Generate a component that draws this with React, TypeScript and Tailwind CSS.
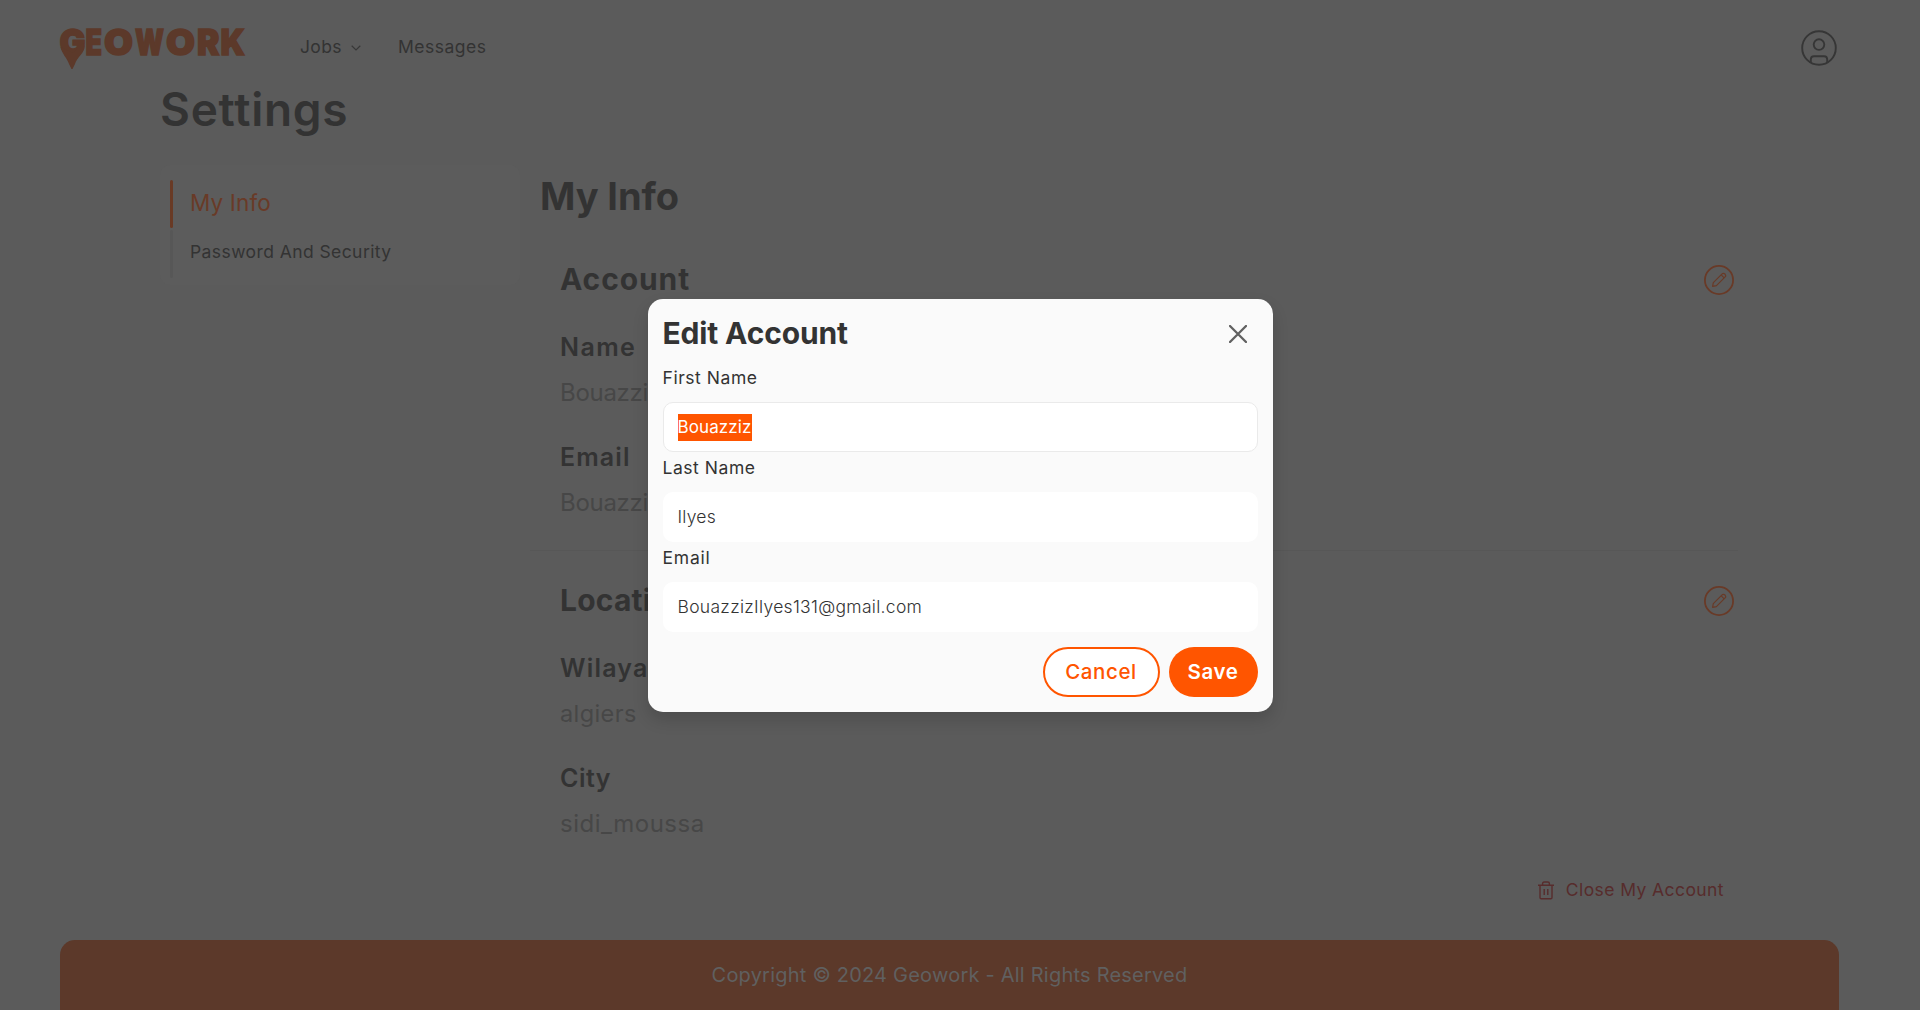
import type { ReactNode } from "react";

const logoLetters: [string, number, number][] = [
  ["G", 0.5, 26],
  ["E", 26.5, 16.5],
  ["O", 45, 29],
  ["W", 76, 29],
  ["O", 107, 29],
  ["R", 138, 22.5],
  ["K", 161.5, 24.5],
];

function Logo() {
  return (
    <svg viewBox="0 0 188 44" className="h-11 w-[188px] overflow-visible fill-[#5c392a] stroke-[#5c392a]" aria-label="Geowork">
      {logoLetters.map(([letter, x, width], i) => (
        <text
          key={i}
          x={x}
          y={28.7}
          textLength={width}
          lengthAdjust="spacingAndGlyphs"
          className="font-['Inter',sans-serif] text-[35px] font-black"
          strokeWidth="1.4"
        >
          {letter}
        </text>
      ))}
      <path d="M1.5 21 C3 28 8 32 10 38 L12.5 43 H13.5 L16 38 C18 31 26 27 25.5 20 L24 17 L14 27 Z" stroke="none" />
    </svg>
  );
}

function ChevronIcon() {
  return (
    <svg viewBox="0 0 10 6" className="mt-[3px] h-1.5 w-2.5 fill-none stroke-[#383838]" strokeWidth="1.2">
      <path d="M.7 .8 5 5 9.3 .8" />
    </svg>
  );
}

function UserIcon() {
  return (
    <svg viewBox="0 0 36 36" className="size-9 fill-none stroke-[#363636]" strokeWidth="1.9">
      <circle cx="18" cy="18" r="16.8" />
      <circle cx="18" cy="14.6" r="5.3" />
      <path d="M9.8 32.4 V29.5 Q9.8 26.2 13 26.2 H23 Q26.2 26.2 26.2 29.5 V32.4" />
    </svg>
  );
}

function EditButton() {
  return (
    <button className="size-[30px]">
      <svg viewBox="0 0 30 30" className="size-[30px] fill-none stroke-[#693a27]" strokeLinejoin="round">
        <circle cx="15" cy="15" r="14.1" strokeWidth="1.8" />
        <path d="M8.6 21.4 L9.3 17.6 L17.8 9.1 Q19.3 7.6 21 9 Q22.4 10.7 20.9 12.2 L12.4 20.7 Z M17.2 9.8 L20.2 12.8" strokeWidth="1.2" />
      </svg>
    </button>
  );
}

function TrashIcon() {
  return (
    <svg viewBox="0 0 16 19" className="h-[19px] w-4 fill-none stroke-[#572c2c]" strokeWidth="1.4">
      <path d="M0 4.2 H16 M2 4.2 V16.6 Q2 17.8 3.2 17.8 H12.8 Q14 17.8 14 16.6 V4.2 M4.6 4 V2.6 Q4.6 1 6.2 1 H9.8 Q11.4 1 11.4 2.6 V4 M6.2 8 V14 M9.8 8 V14" />
    </svg>
  );
}

function Section({ title, children }: { title: ReactNode; children: ReactNode }) {
  return (
    <section className="pl-[30px] pr-1">
      <div className="flex h-[30px] items-center justify-between">
        <h3 className="-mt-0.5 text-[30px] font-bold leading-[30px] tracking-[0.9px]">{title}</h3>
        <EditButton />
      </div>
      {children}
    </section>
  );
}

function Value({ children }: { children: ReactNode }) {
  return <p className="mt-[9px] pb-px text-[24px] leading-[35px] tracking-[0.5px] text-[#474747]">{children}</p>;
}

function Label({ children }: { children: ReactNode }) {
  return <label className="block text-[17.5px] leading-6 tracking-[0.55px]">{children}</label>;
}

function EditAccountModal() {
  return (
    <div className="absolute inset-0 flex items-start justify-center pt-[299px]">
      <div className="h-[413px] w-[625px] rounded-[15px] bg-[#fafafa] px-[15px] pt-[15px] shadow-[0_8px_16px_rgba(0,0,0,0.15)]">
        <div className="flex h-10 items-center justify-between">
          <h2 className="pb-0.5 text-[30px] font-bold leading-[38px] tracking-[-0.15px]">Edit Account</h2>
          <button className="mr-[11px]">
            <svg viewBox="0 0 18 18" className="size-[18px] stroke-[#606060]" strokeWidth="2.3" strokeLinecap="round">
              <path d="M1 1 17 17 M17 1 1 17" />
            </svg>
          </button>
        </div>
        <div className="mt-3">
          <Label>First Name</Label>
          <div className="mt-3 flex h-[50px] items-center rounded-[10px] border border-[#eaeaea] bg-white px-[14px]">
            <span className="bg-[#ff5500] text-[17px] leading-[27px] tracking-[0.1px] text-white">Bouazziz</span>
          </div>
        </div>
        <div className="mt-1">
          <Label>Last Name</Label>
          <div className="mt-3 flex h-[50px] items-center rounded-[10px] bg-white px-[15px] pt-px">
            <span className="text-[17.5px] font-light tracking-[0.25px]">Ilyes</span>
          </div>
        </div>
        <div className="mt-1">
          <label className="block text-[17.5px] leading-6 tracking-[0.8px]">Email</label>
          <div className="mt-3 flex h-[50px] items-center rounded-[10px] bg-white px-[15px] pt-px">
            <span className="text-[17.5px] font-light tracking-[0.3px]">BouazzizIlyes131@gmail.com</span>
          </div>
        </div>
        <div className="mt-[15px] flex justify-end gap-[9px]">
          <button className="h-[50px] w-[117px] rounded-full border-2 border-[#ff5500] bg-white text-[20.5px] font-medium tracking-[0.6px] text-[#ff5500]">
            Cancel
          </button>
          <button className="h-[50px] w-[89px] rounded-full bg-[#ff5500] text-[20.5px] font-semibold tracking-[0.6px] text-white">
            Save
          </button>
        </div>
      </div>
    </div>
  );
}

export default function App() {
  return (
    <div className="relative h-[1010px] overflow-hidden bg-[#5b5b5b] font-['Inter',sans-serif] text-[#333333]">
      <header className="flex h-[84px] items-center pl-[59px] pr-[83px] pt-3">
        <Logo />
        <nav className="flex items-center pb-[3px] pl-[53px] text-[17.5px] leading-6">
          <a className="flex w-[98px] items-center">
            <span className="w-[51px] tracking-[0.35px]">Jobs</span>
            <ChevronIcon />
          </a>
          <a className="tracking-[0.5px]">Messages</a>
        </nav>
        <div className="ml-auto">
          <UserIcon />
        </div>
      </header>

      <h1 className="pl-[160px] text-[46px] font-semibold leading-[50px] tracking-[0.75px]">Settings</h1>

      <div className="mt-[31px] flex items-start pl-40">
        <aside className="flex h-[120px] w-[360px] flex-col gap-[2px] rounded-[10px] bg-[#5c5c5c] pl-[10px] pt-[15px]">
          <a className="flex h-12">
            <span className="w-[3px] rounded-full bg-[#693a25]" />
            <span className="pl-[17px] text-[22.5px] leading-[45px] tracking-[0.15px] text-[#693a27]">My Info</span>
          </a>
          <a className="flex h-12">
            <span className="w-[3px] rounded-full bg-[#575757]" />
            <span className="pl-[17px] text-[17.5px] leading-[44px] tracking-[0.42px]">Password And Security</span>
          </a>
        </aside>

        <main className="ml-[10px] w-[1208px] pt-2">
          <h2 className="pb-0.5 pl-[10px] text-[38px] font-bold leading-[46px] tracking-[-0.1px]">My Info</h2>
          <div className="mt-11">
            <Section title="Account">
              <h4 className="mt-[34px] pb-px text-[25px] font-semibold leading-9 tracking-[1.4px]">Name</h4>
              <Value>
                <span className="tracking-[-0.3px]">Bouazziz</span>
              </Value>
              <h4 className="mt-[28px] pb-px text-[25px] font-semibold leading-9 tracking-[1.1px]">Email</h4>
              <Value>
                <span className="tracking-[-0.3px]">Bouazziz</span>
              </Value>
            </Section>
          </div>
          <hr className="mb-[35px] mt-[29px] border-t border-[#575757]" />
          <Section title={<span className="tracking-[0.2px]">Location</span>}>
            <h4 className="mt-[34px] pb-px text-[25px] font-semibold leading-9 tracking-[1.2px]">Wilaya</h4>
            <p className="mt-[9px] pb-px text-[23.5px] leading-[35px] tracking-[0.4px] text-[#474747]">algiers</p>
            <h4 className="mt-[28px] pb-px text-[25px] font-semibold leading-9 tracking-[0.5px]">City</h4>
            <Value>sidi_moussa</Value>
          </Section>
          <button className="ml-auto mr-[14px] mt-[36px] flex h-6 items-center gap-[12px] text-[17.5px] leading-6 tracking-[0.42px] text-[#572c2c]">
            <TrashIcon />
            Close My Account
          </button>
        </main>
      </div>

      <footer className="ml-[60px] mr-[81px] mt-[38px] h-[70px] rounded-t-[15px] bg-[#5c392a] pt-[23px] text-center text-[20px] leading-6 tracking-[0.22px] text-[#606060]">
        Copyright © 2024 Geowork - All Rights Reserved
      </footer>

      <EditAccountModal />
    </div>
  );
}
